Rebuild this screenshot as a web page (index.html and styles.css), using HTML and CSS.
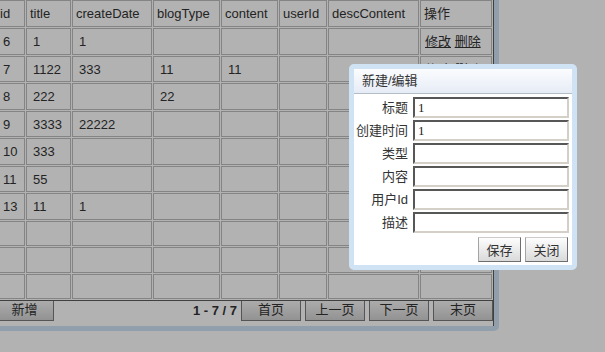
FILE: index.html
```html
<!DOCTYPE html>
<html lang="zh-CN">
<head>
    <meta charset="UTF-8">
    <meta name="viewport" content="width=device-width, initial-scale=1.0">
    <title>博客管理</title>
    <link rel="stylesheet" href="styles.css">
</head>
<body>
    <div class="grid-panel">
        <div class="grid">
            <table class="grid-table">
                <thead>
                    <tr>
                        <th class="col-id">id</th>
                        <th class="col-title">title</th>
                        <th class="col-date">createDate</th>
                        <th class="col-type">blogType</th>
                        <th class="col-content">content</th>
                        <th class="col-user">userId</th>
                        <th class="col-desc">descContent</th>
                        <th class="col-ops">操作</th>
                    </tr>
                </thead>
                <tbody>
                    <tr><td>6</td><td>1</td><td>1</td><td></td><td></td><td></td><td></td><td class="ops"><a href="#">修改</a> <a href="#">删除</a></td></tr>
                    <tr><td>7</td><td>1122</td><td>333</td><td>11</td><td>11</td><td></td><td></td><td class="ops"><a href="#">修改</a> <a href="#">删除</a></td></tr>
                    <tr><td>8</td><td>222</td><td></td><td>22</td><td></td><td></td><td></td><td class="ops"><a href="#">修改</a> <a href="#">删除</a></td></tr>
                    <tr><td>9</td><td>3333</td><td>22222</td><td></td><td></td><td></td><td></td><td class="ops"><a href="#">修改</a> <a href="#">删除</a></td></tr>
                    <tr><td>10</td><td>333</td><td></td><td></td><td></td><td></td><td></td><td class="ops"><a href="#">修改</a> <a href="#">删除</a></td></tr>
                    <tr><td>11</td><td>55</td><td></td><td></td><td></td><td></td><td></td><td class="ops"><a href="#">修改</a> <a href="#">删除</a></td></tr>
                    <tr><td>13</td><td>11</td><td>1</td><td></td><td></td><td></td><td></td><td class="ops"><a href="#">修改</a> <a href="#">删除</a></td></tr>
                    <tr class="empty-row"><td></td><td></td><td></td><td></td><td></td><td></td><td></td><td></td></tr>
                    <tr class="empty-row"><td></td><td></td><td></td><td></td><td></td><td></td><td></td><td></td></tr>
                    <tr class="empty-row"><td></td><td></td><td></td><td></td><td></td><td></td><td></td><td></td></tr>
                </tbody>
            </table>

            <div class="pager">
                <button class="btn pager-btn btn-add">新增</button>
                <span class="pager-info">1 - 7 / 7</span>
                <button class="btn pager-btn">首页</button>
                <button class="btn pager-btn">上一页</button>
                <button class="btn pager-btn">下一页</button>
                <button class="btn pager-btn">末页</button>
            </div>
        </div>
    </div>

    <!-- modal mask over the grid -->
    <div class="mask"></div>

    <div class="dialog">
        <div class="dialog-title">新建/编辑</div>
        <form class="dialog-body" onsubmit="return false">
            <label>标题</label>
            <input type="text" value="1">
            <label>创建时间</label>
            <input type="text" value="1">
            <label>类型</label>
            <input type="text">
            <label>内容</label>
            <input type="text">
            <label>用户Id</label>
            <input type="text">
            <label>描述</label>
            <input type="text">
            <div class="dialog-buttons">
                <button class="btn dialog-btn">保存</button>
                <button class="btn dialog-btn">关闭</button>
            </div>
        </form>
    </div>
</body>
</html>
```

FILE: styles.css
```css
* {
    margin: 0;
    padding: 0;
    box-sizing: border-box;
}

body {
    font-family: "Liberation Sans", "Noto Sans CJK SC", sans-serif;
    font-size: 13px;
    color: #333;
    background: #fff;
    overflow: hidden;
}

/* grid panel */

.grid-panel {
    width: max-content;
    margin: -7px 0 0 -11px;
    border: 5px solid #d0e3f5;
    border-radius: 5px;
}

.grid {
    border-top: 1px solid #5c5c5c;
    border-left: 1px solid #5c5c5c;
    border-right: 1px solid #5c5c5c;
}

.grid-table {
    width: 498px;
    table-layout: fixed;
    border-collapse: separate;
    border-spacing: 1px;
}

.grid-table th,
.grid-table td {
    border: 1px solid #bdbdbd;
    text-align: left;
    white-space: nowrap;
    overflow: hidden;
}

.grid-table th {
    font-weight: normal;
    padding: 4px 3px;
    line-height: 17px;
}

.grid-table td {
    padding: 5px 6px 3px;
    line-height: 16.57px;
}

.grid-table td.ops {
    padding-left: 4px;
}

.grid-table .empty-row {
    height: 25.33px;
}

.grid-table .empty-row td {
    padding: 0;
}

.col-id { width: 29px; }
.col-title { width: 45px; }
.col-date { width: 80px; }
.col-type { width: 67px; }
.col-content { width: 57px; }
.col-user { width: 48px; }
.col-desc { width: 91px; }
.col-ops { width: 72px; }

.ops a {
    color: #333;
    text-decoration: underline;
}

/* pager */

.pager {
    display: flex;
    align-items: flex-start;
    gap: 4px;
    border-top: 1px solid #5c5c5c;
    padding-bottom: 5px;
}

.btn {
    font-family: inherit;
    font-size: 13px;
    color: #333;
    background: linear-gradient(#fdfdfd, #dadada);
    cursor: pointer;
}

.pager-btn {
    width: 60px;
    height: 20px;
    line-height: 18px;
    border: 1px solid #7a7a7a;
    border-top: 0;
    background: linear-gradient(#f6f6f6, #d2d2d2);
}

.btn-add {
    width: 59px;
}

.pager-info {
    margin-left: auto;
    font-weight: bold;
    line-height: 20px;
}

/* modal */

.mask {
    position: fixed;
    top: 0;
    left: 0;
    right: 0;
    bottom: 0;
    background: rgba(0, 0, 0, 0.3);
}

.dialog {
    position: fixed;
    left: 349px;
    top: 64px;
    width: 228px;
    border: 5px solid #d0e3f5;
    border-radius: 5px;
    background: #fff;
}

.dialog-title {
    height: 25px;
    line-height: 24px;
    padding-left: 8px;
    background: linear-gradient(#fbfcfe, #e6ecf6);
    border-bottom: 1px solid #b4bcc6;
    border-radius: 2px 2px 0 0;
}

.dialog-body {
    display: grid;
    grid-template-columns: 54px 156px;
    column-gap: 5px;
    row-gap: 2px;
    padding: 3px 3px 3px 0;
}

.dialog-body label {
    text-align: right;
    line-height: 21px;
    white-space: nowrap;
}

.dialog-body input {
    height: 21px;
    padding: 0 3px;
    font-family: "Liberation Serif", "Noto Sans CJK SC", serif;
    font-size: 13px;
    color: #222;
    border: 2px solid;
    border-color: #575757 #d4d0c8 #d4d0c8 #575757;
    outline: none;
}

.dialog-buttons {
    grid-column: 1 / -1;
    display: flex;
    justify-content: flex-end;
    gap: 4px;
    margin-top: 2px;
    padding-right: 1px;
}

.dialog-btn {
    width: 43px;
    height: 25px;
    border: 1px solid;
    border-color: #cccccc #6e6e6e #6e6e6e #a4a4a4;
}
```
